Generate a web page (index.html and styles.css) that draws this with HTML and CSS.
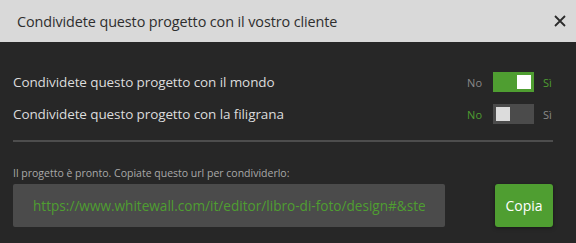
FILE: index.html
```html
<!DOCTYPE html>
<html lang="it">
<head>
    <meta charset="UTF-8">
    <meta name="viewport" content="width=device-width, initial-scale=1.0">
    <title>Condividete il progetto</title>
    <link rel="stylesheet" href="styles.css">
</head>
<body>
    <div class="dialog">
        <header class="dialog-header">
            <span class="dialog-title">Condividete questo progetto con il vostro cliente</span>
            <span class="close-btn">
                <svg width="12" height="12" viewBox="0 0 12 12">
                    <path d="M1 1 L11 11 M11 1 L1 11" stroke="#2b2b2b" stroke-width="1.8" fill="none"/>
                </svg>
            </span>
        </header>

        <div class="dialog-body">
            <div class="option-row">
                <span class="option-label">Condividete questo progetto con il mondo</span>
                <div class="switch-group">
                    <span class="switch-text">No</span>
                    <span class="switch on"><span class="knob"></span></span>
                    <span class="switch-text active">Sì</span>
                </div>
            </div>
            <div class="option-row">
                <span class="option-label">Condividete questo progetto con la filigrana</span>
                <div class="switch-group">
                    <span class="switch-text active">No</span>
                    <span class="switch"><span class="knob"></span></span>
                    <span class="switch-text">Sì</span>
                </div>
            </div>

            <hr class="divider">

            <p class="url-label">Il progetto è pronto. Copiate questo url per condividerlo:</p>
            <div class="url-row">
                <div class="url-box">
                    <span class="url-text">https://www.whitewall.com/it/editor/libro-di-foto/design#&amp;ste</span>
                </div>
                <button class="copy-btn">Copia</button>
            </div>
        </div>
    </div>
</body>
</html>
```

FILE: styles.css
```css
:root {
    --green: #4f9e31;
    --dark: #272727;
    --field: #4b4b4b;
    --header: #d9d9d9;
}

* {
    margin: 0;
    padding: 0;
    box-sizing: border-box;
    font-family: 'Open Sans', 'Noto Sans', sans-serif;
}

body {
    background-color: var(--dark);
    width: 576px;
    height: 243px;
    overflow: hidden;
}

.dialog-header {
    background-color: var(--header);
    height: 42px;
    display: flex;
    align-items: center;
    justify-content: space-between;
    padding: 0 10px 0 17px;
}

.dialog-title {
    font-size: 14.4px;
    color: #2e2e2e;
    letter-spacing: -0.1px;
}

.close-btn {
    display: flex;
    width: 12px;
    height: 12px;
}

.dialog-body {
    padding: 0 23px 0 13px;
}

.option-row {
    display: flex;
    align-items: center;
    justify-content: space-between;
    height: 32px;
}

.option-row:first-child {
    margin-top: 24px;
}

.option-label {
    font-size: 13.5px;
    color: #dcdcdc;
    letter-spacing: -0.1px;
}

.switch-group {
    display: flex;
    align-items: center;
    margin-right: -16px;
}

.switch-text {
    font-size: 11px;
    color: #8a8a8a;
    width: 26px;
}

.switch-text:first-child {
    text-align: right;
    margin-right: 11px;
}

.switch-text:last-child {
    margin-left: 9px;
}

.switch-text.active {
    color: var(--green);
}

.switch {
    width: 41px;
    height: 20px;
    background-color: var(--field);
    display: flex;
    align-items: center;
    padding: 0 3px;
}

.switch .knob {
    width: 14px;
    height: 14px;
    background-color: #dcdcdc;
}

.switch.on {
    background-color: var(--green);
    justify-content: flex-end;
}

.switch.on .knob {
    background-color: #fff;
}

.divider {
    border: none;
    height: 2px;
    background-color: #4d4d4d;
    margin-top: 10px;
}

.url-label {
    font-size: 10.5px;
    color: #a9a9a9;
    margin-top: 24px;
}

.url-row {
    display: flex;
    justify-content: space-between;
    margin-top: 4px;
}

.url-box {
    width: 432px;
    height: 43px;
    background-color: var(--field);
    border-radius: 2px;
    display: flex;
    align-items: center;
    padding: 0 20px 0 20px;
    overflow: hidden;
}

.url-text {
    font-size: 13.6px;
    color: var(--green);
    white-space: nowrap;
    overflow: hidden;
}

.copy-btn {
    width: 58px;
    height: 43px;
    background-color: var(--green);
    color: #fff;
    border: none;
    border-radius: 3px;
    font-size: 14px;
    box-shadow: 0 1px 4px rgba(0, 0, 0, 0.4);
}
```
